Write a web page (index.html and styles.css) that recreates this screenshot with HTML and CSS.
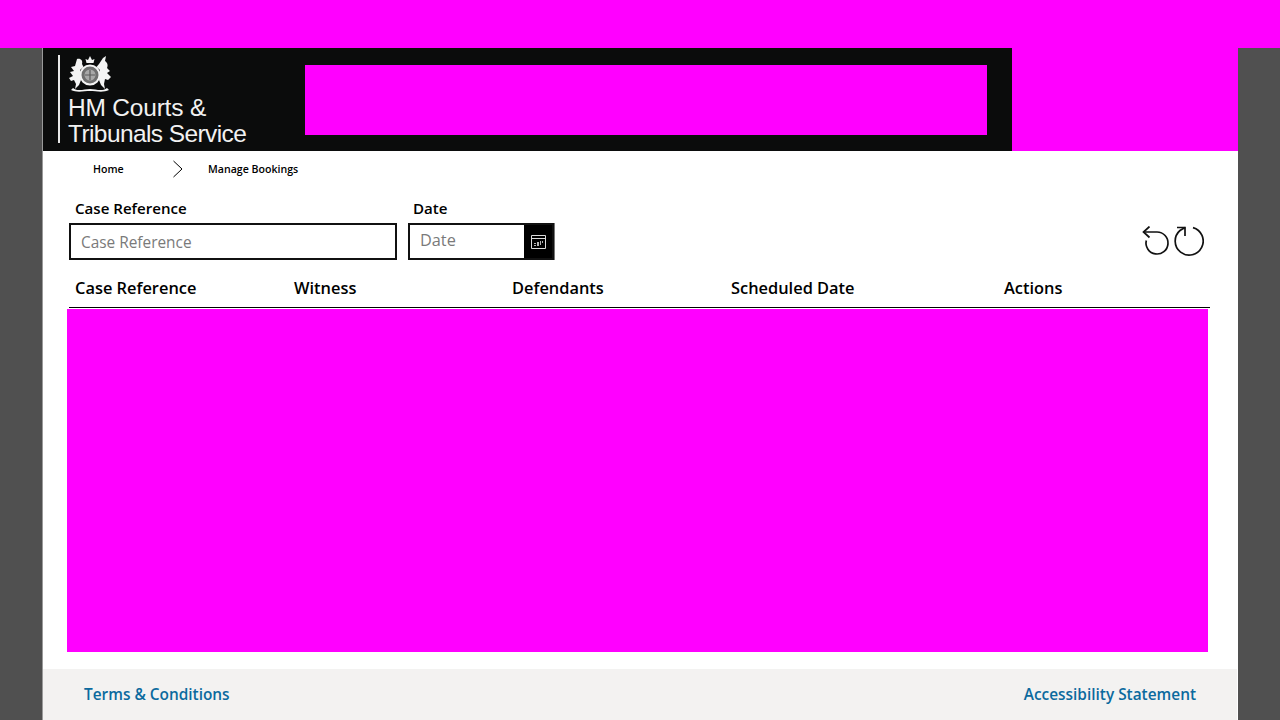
FILE: index.html
```html
<!DOCTYPE html>
<html lang="en">
    <head>
        <title>Manage Bookings</title>
        <link rel="stylesheet" href="styles.css">
    </head>

    <body>
        <div class="topBar"></div>

        <div class="app">
            <div class="header">
                <div class="logoArea">
                    <div class="logo">
                        <svg class="crest" width="44" height="38" viewBox="0 0 44 38">
                            <g fill="#f4f4f4">
                                <path d="M18.5 8 L17.5 4 L20 5 L22 1 L24 5 L26.500 4 L25.500 8 Z"/>
                                <path d="M9 4 C13 3 15 6 14 9 L15.500 12 L12 15 L13 25 L11 30 L7 34 L8 29 L6 25 L3 26 L1 23 L5 21 L2 17 L6 16 L3 12 L7 11 Z"/>
                                <path d="M35 3 L38 1 L37 6 C40 8 40 11 39 13 L42 16 L39 18 L43 22 L40 25 L37 24 L36 29 L37 34 L33 30 L31 25 L32 15 L28.500 12 L31 9 Z"/>
                                <path d="M5 33 C10 37 16 34 22 34 C28 34 34 37 39 33 L41 35 C35 38 28 36 22 36 C16 36 9 38 3 35 Z"/>
                            </g>
                            <circle cx="22" cy="20" r="9.500" fill="#6f6f6f" stroke="#f4f4f4" stroke-width="2"/>
                            <circle cx="22" cy="20" r="5.500" fill="#a8a8a8"/>
                            <path d="M22 15 V25 M17 20 H27" stroke="#5c5c5c" stroke-width="1.200"/>
                        </svg>
                        <div class="logoText"><span class="logoLine">HM Courts &amp;</span><br>Tribunals Service</div>
                    </div>
                    <div class="bannerBlock"></div>
                </div>
                <div class="headerRest"></div>
            </div>

            <div class="crumbs">
                <span class="crumb crumbHome">Home</span>
                <svg class="crumbArrow" width="12" height="18" viewBox="0 0 12 18">
                    <path d="M1.5 1 L10 9 L1.5 17" fill="none" stroke="#000" stroke-width="1"/>
                </svg>
                <span class="crumb">Manage Bookings</span>
            </div>

            <div class="filters">
                <div class="field">
                    <label class="fieldLabel" for="caseRef">Case Reference</label>
                    <input class="caseInput" type="text" id="caseRef" placeholder="Case Reference">
                </div>
                <div class="field">
                    <label class="fieldLabel" for="dateInput">Date</label>
                    <div class="dateBox">
                        <input class="dateInput" type="text" id="dateInput" placeholder="Date">
                        <div class="dateBtn">
                            <svg width="15" height="14" viewBox="0 0 15 14">
                                <path d="M0.500 0.500 H14.500 V13.500 H0.500 Z M0.500 3.500 H14.500" fill="none" stroke="#dcdcdc" stroke-width="1"/>
                                <path d="M3 8 H5 V9 H3 Z M6 7 H8 V11 H6 Z M9 6 H10 V10 H9 Z M11 6 H12 V8 H11 Z M3 10 H5 V11 H3 Z" fill="#b5b5b5"/>
                            </svg>
                        </div>
                    </div>
                </div>
                <div class="actionIcons">
                    <svg width="29" height="31" viewBox="0 0 29 31">
                        <path d="M1.500 6 H15 A11 11 0 1 1 4.300 14.500" fill="none" stroke="#111" stroke-width="1.700"/>
                        <path d="M7.500 0.500 L1.500 6 L7.500 11.500" fill="none" stroke="#111" stroke-width="1.700"/>
                    </svg>
                    <svg width="30" height="31" viewBox="0 0 30 31">
                        <path d="M19 1.600 A14 14 0 1 1 6 4.500 L11 1.500" fill="none" stroke="#111" stroke-width="1.700"/>
                        <path d="M3 1.500 H11 V10" fill="none" stroke="#111" stroke-width="1.700"/>
                    </svg>
                </div>
            </div>

            <div class="tableHead">
                <div class="col colCase">Case Reference</div>
                <div class="col colWitness">Witness</div>
                <div class="col colDefendants">Defendants</div>
                <div class="col colDate">Scheduled Date</div>
                <div class="col">Actions</div>
            </div>

            <div class="tableBody"></div>

            <div class="footer">
                <a class="footLink">Terms &amp; Conditions</a>
                <a class="footLink">Accessibility Statement</a>
            </div>
        </div>
    </body>
</html>
```

FILE: styles.css
```css
html, body {
    margin: 0;
    height: 720px;
    overflow: hidden;
}
body {
    background-color: #505050;
    font-family: 'Open Sans', sans-serif;
    color: #000;
}
.topBar {
    height: 48px;
    background-color: #ff00ff;
}
.app {
    width: 1195px;
    margin-left: 43px;
    height: 672px;
    background-color: #fff;
    box-shadow: -1px 0 0 #9a9a9a;
}
.header {
    display: flex;
    height: 103px;
}
.logoArea {
    width: 969px;
    display: flex;
    background-color: #0b0c0c;
}
.headerRest {
    flex: 1;
    background-color: #ff00ff;
}
.logo {
    width: 262px;
    box-sizing: border-box;
    margin: 7px -15px 8px 15px;
    padding-left: 8px;
    border-left: 2px solid #e8e8e8;
    color: #f2f2f2;
}
.crest {
    display: block;
}
.logoText {
    font-family: 'Liberation Sans', sans-serif;
    font-size: 24.5px;
    line-height: 26px;
    letter-spacing: -0.6px;
    margin-top: 2px;
}
.logoLine {
    letter-spacing: -0.2px;
}
.bannerBlock {
    width: 682px;
    height: 70px;
    margin-top: 17px;
    background-color: #ff00ff;
}
.crumbs {
    display: flex;
    align-items: center;
    height: 36px;
    padding-left: 50px;
}
.crumb {
    font-size: 10.6px;
    font-weight: 600;
    margin-top: -1px;
}
.crumbHome {
    width: 79px;
}
.crumbArrow {
    margin-right: 24px;
}
.filters {
    display: flex;
    align-items: flex-end;
    padding-left: 26px;
    padding-right: 1px;
    height: 73px;
}
.field {
    display: flex;
    flex-direction: column;
    margin-right: 11px;
}
.fieldLabel {
    font-size: 15.1px;
    font-weight: 600;
    line-height: 20px;
    margin-left: 6px;
    margin-bottom: 5px;
}
.field + .field .fieldLabel {
    margin-left: 5px;
}
.caseInput {
    width: 328px;
    height: 37px;
    box-sizing: border-box;
    border: 2px solid #111;
    padding: 1px 10px 0;
    font-family: 'Open Sans', sans-serif;
    font-size: 15.4px;
    outline: none;
}
.caseInput::placeholder, .dateInput::placeholder {
    color: #7a7a7a;
    opacity: 1;
}
.dateBox {
    display: flex;
    width: 146px;
    height: 37px;
    box-sizing: border-box;
    border: 2px solid #111;
    box-shadow: 1px 0 0 #777;
}
.dateInput {
    width: 114px;
    box-sizing: border-box;
    border: none;
    padding: 0 10px 4px;
    font-family: 'Open Sans', sans-serif;
    font-size: 16.3px;
    outline: none;
}
.dateBtn {
    flex: 1;
    background-color: #000;
    display: flex;
    align-items: center;
    justify-content: center;
}
.actionIcons {
    margin-left: auto;
    margin-right: 33px;
    display: flex;
    gap: 3px;
    margin-bottom: 3px;
}
.tableHead {
    display: flex;
    margin: 9px 28px 0 26px;
    padding-left: 6px;
    padding-bottom: 1px;
    height: 37px;
    align-items: center;
    border-bottom: 1px solid #000;
    font-size: 16.4px;
    font-weight: 600;
}
.colCase {
    width: 219px;
}
.colWitness {
    width: 218px;
}
.colDefendants {
    width: 219px;
}
.colDate {
    width: 273px;
}
.tableBody {
    height: 343px;
    width: 1141px;
    margin: 1px 0 0 24px;
    background-color: #ff00ff;
}
.footer {
    display: flex;
    justify-content: space-between;
    align-items: center;
    height: 51px;
    margin-top: 17px;
    margin-right: 1px;
    padding: 0 41px;
    background-color: #f3f2f1;
}
.footLink {
    color: #0b6a9e;
    font-size: 15.4px;
    font-weight: 600;
}
```
